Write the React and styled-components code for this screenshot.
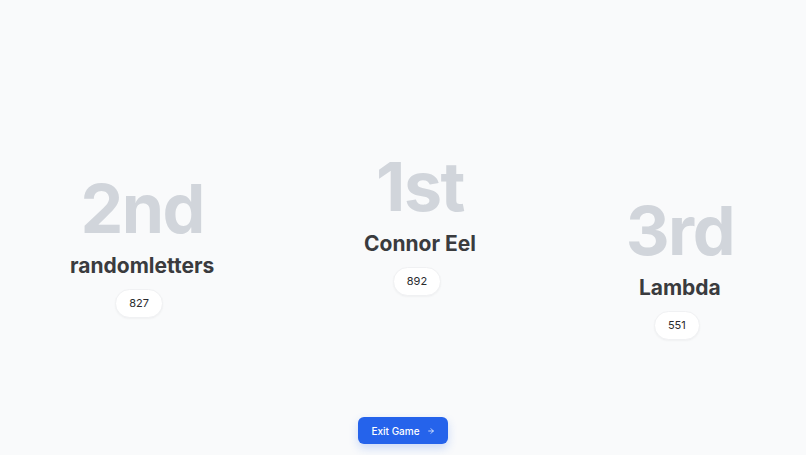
import React from "react";
import styled, { createGlobalStyle } from "styled-components";

const GlobalStyle = createGlobalStyle`
  html, body {
    margin: 0;
    padding: 0;
    background: #f9fafb;
    font-family: Inter, "Noto Sans", "Liberation Sans", sans-serif;
  }
  * {
    box-sizing: border-box;
  }
`;

const Page = styled.div`
  display: flex;
  flex-direction: column;
  width: 100%;
  height: 455px;
  background: #f9fafb;
`;

const Podium = styled.div`
  flex: 1;
  display: flex;
  justify-content: space-between;
  align-items: flex-start;
  padding: 152px 72px 0 70px;
`;

const Place = styled.div`
  display: flex;
  flex-direction: column;
  align-items: center;
  margin-top: ${(props) => props.drop}px;
`;

const Rank = styled.div`
  font-size: 68px;
  line-height: 68px;
  font-weight: 700;
  letter-spacing: -1.5px;
  color: #d1d5db;
`;

const Name = styled.div`
  margin-top: 11px;
  font-size: 21px;
  line-height: 26px;
  font-weight: 700;
  color: #3a3b3e;
`;

const Score = styled.div`
  margin: 10px 6px 0 0;
  padding: 6px 13px;
  font-size: 11px;
  line-height: 15px;
  color: #2a2b2e;
  background: #fff;
  border: 1px solid #f0f1f3;
  border-radius: 999px;
  box-shadow: 0 1px 2px rgba(0, 0, 0, 0.04);
`;

const Footer = styled.div`
  display: flex;
  justify-content: center;
  padding-bottom: 11px;
`;

const ExitButton = styled.button`
  display: flex;
  align-items: center;
  gap: 7px;
  height: 27px;
  padding: 0 13px;
  border: none;
  border-radius: 6px;
  background: #2563eb;
  color: #fff;
  font-family: inherit;
  font-size: 10px;
  font-weight: 500;
  box-shadow: 0 4px 10px rgba(37, 99, 235, 0.22);
  cursor: pointer;
`;

const Arrow = () => (
  <svg width="8" height="8" viewBox="0 0 24 24" fill="none" stroke="currentColor" strokeWidth="2.2" strokeLinecap="round" strokeLinejoin="round">
    <path d="M5 12h14" />
    <path d="m12 5 7 7-7 7" />
  </svg>
);

const players = [
  { rank: "2nd", name: "randomletters", score: 827, drop: 22 },
  { rank: "1st", name: "Connor Eel", score: 892, drop: 0 },
  { rank: "3rd", name: "Lambda", score: 551, drop: 44 },
];

export default function App() {
  return (
    <>
      <GlobalStyle />
      <Page>
        <Podium>
          {players.map((p) => (
            <Place key={p.rank} drop={p.drop}>
              <Rank>{p.rank}</Rank>
              <Name>{p.name}</Name>
              <Score>{p.score}</Score>
            </Place>
          ))}
        </Podium>
        <Footer>
          <ExitButton>
            Exit Game <Arrow />
          </ExitButton>
        </Footer>
      </Page>
    </>
  );
}
